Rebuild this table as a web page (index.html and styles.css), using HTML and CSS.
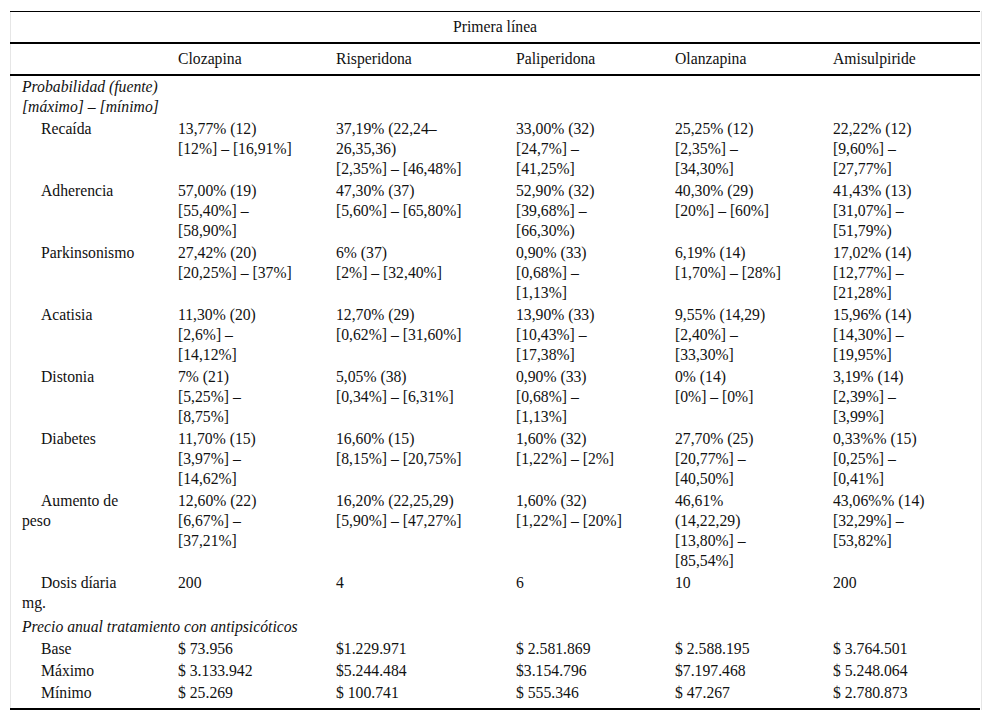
FILE: index.html
```html
<!DOCTYPE html>
<html lang="es">
<head>
<meta charset="utf-8">
<title>Primera línea</title>
<link rel="stylesheet" href="styles.css">
</head>
<body>
<div class="frame">
<table class="tbl">
<colgroup>
<col class="c1"><col class="c2"><col class="c3"><col class="c4"><col class="c5"><col class="c6">
</colgroup>
<thead>
<tr class="h1"><th colspan="6">Primera línea</th></tr>
<tr class="h2"><th></th><th>Clozapina</th><th>Risperidona</th><th>Paliperidona</th><th>Olanzapina</th><th>Amisulpiride</th></tr>
</thead>
<tbody>
<tr><td class="sec">Probabilidad (fuente)<br>[máximo] – [mínimo]</td><td></td><td></td><td></td><td></td><td></td></tr>
<tr><td class="sub">Recaída</td><td>13,77% (12)<br>[12%] – [16,91%]</td><td>37,19% (22,24–<br>26,35,36)<br>[2,35%] – [46,48%]</td><td>33,00% (32)<br>[24,7%] –<br>[41,25%]</td><td>25,25% (12)<br>[2,35%] –<br>[34,30%]</td><td>22,22% (12)<br>[9,60%] –<br>[27,77%]</td></tr>
<tr><td class="sub">Adherencia</td><td>57,00% (19)<br>[55,40%] –<br>[58,90%]</td><td>47,30% (37)<br>[5,60%] – [65,80%]</td><td>52,90% (32)<br>[39,68%] –<br>[66,30%)</td><td>40,30% (29)<br>[20%] – [60%]</td><td>41,43% (13)<br>[31,07%] –<br>[51,79%)</td></tr>
<tr><td class="sub">Parkinsonismo</td><td>27,42% (20)<br>[20,25%] – [37%]</td><td>6% (37)<br>[2%] – [32,40%]</td><td>0,90% (33)<br>[0,68%] –<br>[1,13%]</td><td>6,19% (14)<br>[1,70%] – [28%]</td><td>17,02% (14)<br>[12,77%] –<br>[21,28%]</td></tr>
<tr><td class="sub">Acatisia</td><td>11,30% (20)<br>[2,6%] –<br>[14,12%]</td><td>12,70% (29)<br>[0,62%] – [31,60%]</td><td>13,90% (33)<br>[10,43%] –<br>[17,38%]</td><td>9,55% (14,29)<br>[2,40%] –<br>[33,30%]</td><td>15,96% (14)<br>[14,30%] –<br>[19,95%]</td></tr>
<tr><td class="sub">Distonia</td><td>7% (21)<br>[5,25%] –<br>[8,75%]</td><td>5,05% (38)<br>[0,34%] – [6,31%]</td><td>0,90% (33)<br>[0,68%] –<br>[1,13%]</td><td>0% (14)<br>[0%] – [0%]</td><td>3,19% (14)<br>[2,39%] –<br>[3,99%]</td></tr>
<tr><td class="sub">Diabetes</td><td>11,70% (15)<br>[3,97%] –<br>[14,62%]</td><td>16,60% (15)<br>[8,15%] – [20,75%]</td><td>1,60% (32)<br>[1,22%] – [2%]</td><td>27,70% (25)<br>[20,77%] –<br>[40,50%]</td><td>0,33%% (15)<br>[0,25%] –<br>[0,41%]</td></tr>
<tr><td class="sub">Aumento de<br>peso</td><td>12,60% (22)<br>[6,67%] –<br>[37,21%]</td><td>16,20% (22,25,29)<br>[5,90%] – [47,27%]</td><td>1,60% (32)<br>[1,22%] – [20%]</td><td>46,61%<br>(14,22,29)<br>[13,80%] –<br>[85,54%]</td><td>43,06%% (14)<br>[32,29%] –<br>[53,82%]</td></tr>
<tr><td class="sub">Dosis díaria<br>mg.</td><td>200</td><td>4</td><td>6</td><td>10</td><td>200</td></tr>
<tr class="precio"><td class="sec" colspan="6">Precio anual tratamiento con antipsicóticos</td></tr>
<tr><td class="sub">Base</td><td>$ 73.956</td><td>$1.229.971</td><td>$ 2.581.869</td><td>$ 2.588.195</td><td>$ 3.764.501</td></tr>
<tr><td class="sub">Máximo</td><td>$ 3.133.942</td><td>$5.244.484</td><td>$3.154.796</td><td>$7.197.468</td><td>$ 5.248.064</td></tr>
<tr class="last"><td class="sub">Mínimo</td><td>$ 25.269</td><td>$ 100.741</td><td>$ 555.346</td><td>$ 47.267</td><td>$ 2.780.873</td></tr>
</tbody>
</table>
</div>
</body>
</html>
```
FILE: styles.css
```css
html, body {
  margin: 0;
  padding: 0;
  background: #fff;
}

.frame {
  margin: 11px 0 0 10px;
  width: 970px;
  border-left: 1px solid #e6e6e6;
  border-right: 1px solid #e6e6e6;
}

.tbl {
  width: 970px;
  margin-left: -1px;
  border-collapse: collapse;
  table-layout: fixed;
  font-family: "Liberation Serif", "Times New Roman", serif;
  font-size: 15.7px;
  line-height: 20px;
  color: #111;
  border-top: 1px solid #000;
  border-bottom: 2px solid #000;
}

.c1 { width: 156px; }
.c2 { width: 158px; }
.c3 { width: 180px; }
.c4 { width: 159px; }
.c5 { width: 158px; }
.c6 { width: 159px; }

.tbl th {
  font-weight: normal;
  text-align: left;
  padding: 5px 0 5px 12px;
  white-space: nowrap;
}

.h1 th {
  text-align: center;
  padding-left: 0;
  border-bottom: 2px solid #000;
}

.h2 th {
  border-bottom: 2px solid #000;
}

.tbl td {
  vertical-align: top;
  padding: 1px 0 1px 12px;
  white-space: nowrap;
}

.tbl td.sec {
  font-style: italic;
}

.tbl td.sub {
  text-indent: 19px;
}

.precio td {
  padding-top: 3px;
}

.last td {
  padding-bottom: 5px;
}
```
